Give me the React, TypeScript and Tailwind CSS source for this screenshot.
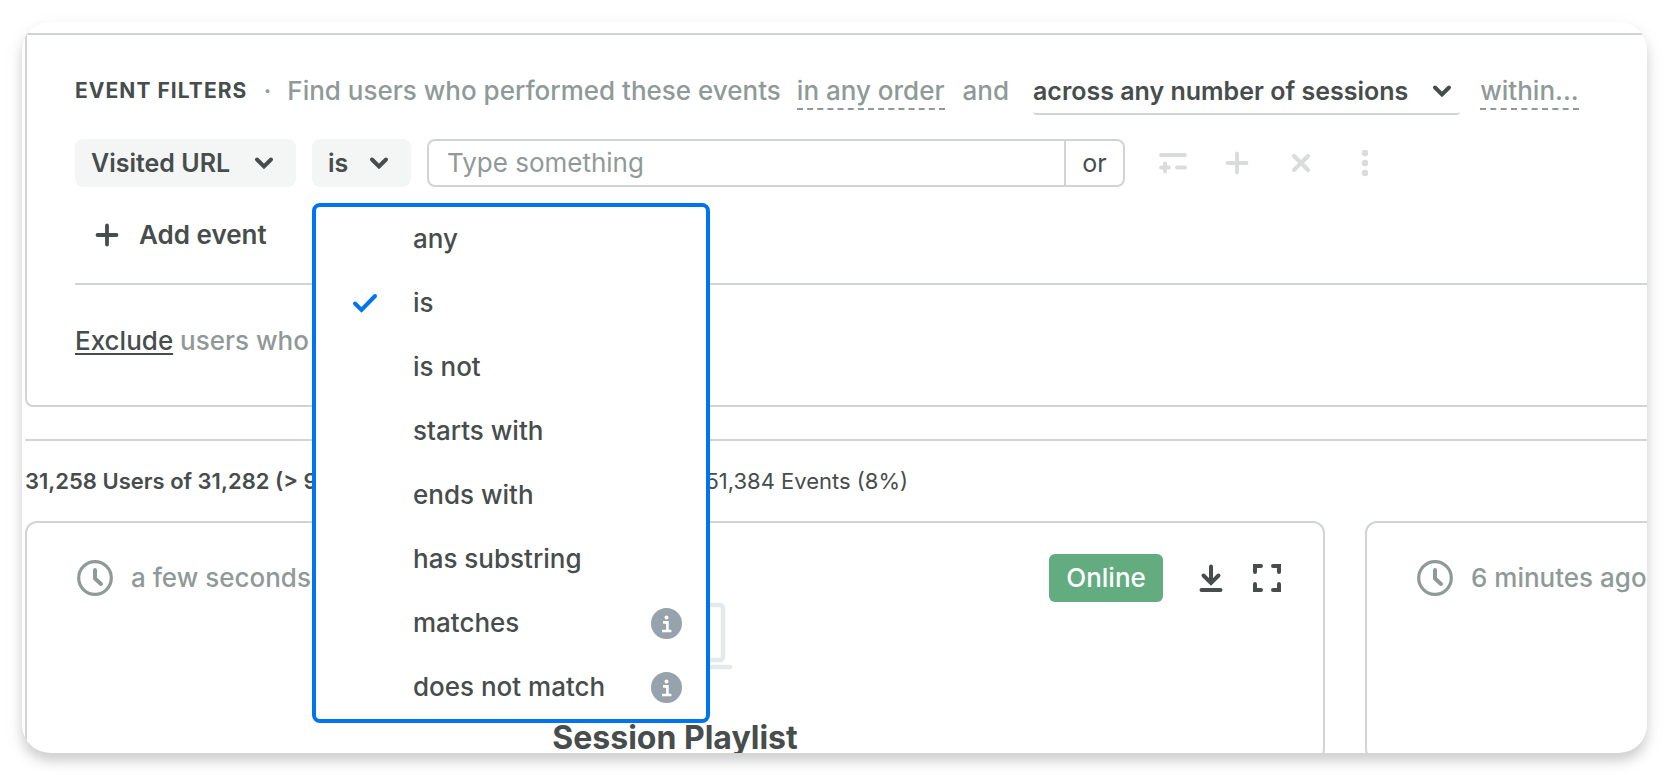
import type { ReactNode } from "react";

const operators = [
  { label: "any" },
  { label: "is" },
  { label: "is not" },
  { label: "starts with" },
  { label: "ends with" },
  { label: "has substring" },
  { label: "matches", info: true },
  { label: "does not match", info: true },
];

function Chevron() {
  return (
    <svg viewBox="0 0 20 14" className="h-[14px] w-5 shrink-0" fill="none" stroke="currentColor" strokeWidth="4" strokeLinecap="round">
      <path d="M3 3.5l7 7 7-7" />
    </svg>
  );
}

function PlusIcon() {
  return (
    <svg viewBox="0 0 24 24" className="size-6" fill="none" stroke="currentColor" strokeWidth="3.8" strokeLinecap="round">
      <path d="M12 2.5v19M2.5 12h19" />
    </svg>
  );
}

function InfoIcon() {
  return (
    <svg viewBox="0 0 31 31" className="size-[31px]">
      <circle cx="15.5" cy="15.5" r="15.5" fill="#96a3ac" />
      <circle cx="15.5" cy="9.4" r="2" fill="#fff" />
      <path d="M12 14.4h4.4v8M11 23h9.4" fill="none" stroke="#fff" strokeWidth="2.6" />
    </svg>
  );
}

function ClockIcon() {
  return (
    <svg viewBox="0 0 36 36" className="size-9 shrink-0" fill="none" stroke="currentColor" strokeLinecap="round" strokeLinejoin="round">
      <circle cx="18" cy="18" r="16.3" strokeWidth="3.2" />
      <path d="M18 10v8.5l6 5.5" strokeWidth="4" />
    </svg>
  );
}

function LaptopIcon() {
  return (
    <svg viewBox="0 0 116 68" className="h-[68px] w-[116px]" fill="none" stroke="#e4e9ec" strokeWidth="4.5" strokeLinecap="round">
      <rect x="10" y="3" width="96" height="55" rx="3" />
      <path d="M3 65h110" />
    </svg>
  );
}

function IconButton(props: { label: string; children: ReactNode }) {
  return (
    <button type="button" aria-label={props.label} className="flex size-8 items-center justify-center">
      {props.children}
    </button>
  );
}

function OperatorMenu() {
  return (
    <ul role="listbox" aria-label="Operator" className="absolute top-16 left-0 z-10 w-[398px] rounded-lg border-4 border-[#0073f0] bg-white font-medium">
      {operators.map((item) => (
        <li key={item.label} role="option" aria-selected={item.label === "is"} className="flex h-16 items-center pr-6 pl-9">
          <span className="w-[61px] text-[#0073f0]">
            {item.label === "is" && (
              <svg viewBox="0 0 26 20" className="h-5 w-[26px]" fill="none" stroke="currentColor" strokeWidth="4" strokeLinecap="round">
                <path d="M3 10.5l6.5 6.5L23 3" />
              </svg>
            )}
          </span>
          <span className="flex-1">{item.label}</span>
          {item.info && <InfoIcon />}
        </li>
      ))}
    </ul>
  );
}

function EventFilters() {
  return (
    <section className="rounded-bl-lg border-2 border-r-0 border-[#d0d5d4] pb-12 pl-12">
      <div className="flex h-[104px] items-start pt-10 font-medium whitespace-nowrap text-[#8f9a98]">
        <h2 className="text-[21px] leading-8 font-bold tracking-wider text-[#464d4c]">EVENT FILTERS</h2>
        <span className="w-10 text-center">·</span>
        <span>Find users who performed these events</span>
        <button type="button" className="ml-4 border-b-2 border-dashed border-[#8f9a98] pb-px">in any order</button>
        <span className="mr-6 ml-[18px]">and</span>
        <button type="button" className="flex items-center gap-6 rounded border-b-2 border-[#d0d5d4] pr-2 pb-1.5 text-[25px] leading-8 font-semibold text-[#464d4c]">
          across any number of sessions
          <Chevron />
        </button>
        <button type="button" className="ml-5 border-b-2 border-dashed border-[#8f9a98] pb-px">within...</button>
      </div>

      <div className="flex h-12 items-center">
        <button type="button" className="flex h-12 w-[221px] items-center justify-between rounded-lg bg-[#f4f6f6] pr-[22px] pl-4 text-[25px] font-semibold">
          Visited URL
          <Chevron />
        </button>
        <div className="relative ml-4">
          <button type="button" aria-haspopup="listbox" aria-expanded="true" className="flex h-12 w-[99px] items-center justify-between rounded-lg bg-[#f4f6f6] pr-[22px] pl-4 text-[25px] font-semibold">
            is
            <Chevron />
          </button>
          <OperatorMenu />
        </div>
        <div className="ml-4 flex h-12 w-[698px] overflow-hidden rounded-lg border-2 border-[#d0d5d4]">
          <input type="text" aria-label="URL" placeholder="Type something" className="min-w-0 flex-1 px-[18px] outline-none placeholder:text-[#8f9a98]" />
          <button type="button" className="w-[59px] border-l-2 border-[#d0d5d4] text-[25px]">or</button>
        </div>
        <div className="ml-8 flex gap-8 text-[#d9dcdb]">
          <IconButton label="Add property">
            <svg viewBox="0 0 28 22" className="h-[22px] w-7 shrink-0" fill="none" stroke="currentColor" strokeWidth="3.8" strokeLinecap="round">
              <path d="M2 3h24M2 15.5h8M6 11.5v8M18 15.5h8" />
            </svg>
          </IconButton>
          <IconButton label="Add">
            <PlusIcon />
          </IconButton>
          <IconButton label="Remove">
            <svg viewBox="0 0 20 20" className="size-5" fill="none" stroke="currentColor" strokeWidth="4.2" strokeLinecap="round">
              <path d="M3 3l14 14M17 3L3 17" />
            </svg>
          </IconButton>
          <IconButton label="More">
            <svg viewBox="0 0 8 28" className="h-7 w-2" fill="currentColor">
              <circle cx="4" cy="4" r="3.2" />
              <circle cx="4" cy="14" r="3.2" />
              <circle cx="4" cy="24" r="3.2" />
            </svg>
          </IconButton>
        </div>
      </div>

      <div className="flex h-[98px] items-center border-b-2 border-[#d0d5d4] pl-5">
        <button type="button" className="flex items-center gap-5 font-semibold">
          <PlusIcon />
          Add event
        </button>
      </div>

      <p className="mt-10 font-medium text-[#8f9a98]">
        <a href="#exclude" className="text-[#464d4c] underline decoration-2 underline-offset-3">Exclude</a> users who
      </p>
    </section>
  );
}

function Results() {
  return (
    <section className="mt-8 border-t-2 border-[#d0d5d4]">
      <div className="flex h-20 items-center text-[22px] whitespace-nowrap">
        <span className="w-[667px] font-semibold">31,258 Users of 31,282 (&gt; 99%)</span>
        <span>251,384 Events (8%)</span>
      </div>
      <div className="flex gap-10">
        <article className="h-60 w-[1300px] shrink-0 rounded-xl border-2 border-[#d0d5d4] px-[50px] pt-[31px]">
          <div className="flex h-12 items-center">
            <div className="flex flex-1 items-center gap-[18px] font-medium text-[#8f9a98]">
              <ClockIcon />
              a few seconds ago
            </div>
            <span className="flex h-12 w-[114px] items-center justify-center rounded-md bg-[#62ac80] font-medium text-white">Online</span>
            <button type="button" aria-label="Download" className="ml-9">
              <svg viewBox="0 0 24 28" className="h-7 w-6" fill="none" stroke="currentColor" strokeWidth="4" strokeLinecap="round">
                <path d="M12 2.5v15M4.5 11.5l7.5 7.5 7.5-7.5M2.5 26h19" />
              </svg>
            </button>
            <button type="button" aria-label="Full screen" className="mr-[-8px] ml-[30px]">
              <svg viewBox="0 0 28 28" className="size-7" fill="none" stroke="currentColor" strokeWidth="4" strokeLinecap="round">
                <path d="M2 8V2h6M20 2h6v6M26 20v6h-6M8 26H2v-6" />
              </svg>
            </button>
          </div>
          <div className="flex flex-col items-center">
            <LaptopIcon />
            <h3 className="mt-12 text-[32px] leading-10 font-bold">Session Playlist</h3>
          </div>
        </article>
        <article className="h-60 w-[1300px] shrink-0 rounded-xl border-2 border-[#d0d5d4] px-[50px] pt-[31px]">
          <div className="flex h-12 items-center gap-[18px] font-medium whitespace-nowrap text-[#8f9a98]">
            <ClockIcon />
            6 minutes ago
          </div>
        </article>
      </div>
    </section>
  );
}

function App() {
  return (
    <div className="h-screen overflow-hidden bg-white p-[22px] font-['Inter',sans-serif] text-[26px] leading-8 text-[#464d4c]">
      <main className="h-full overflow-hidden rounded-[28px] bg-white pt-[11px] pl-[3px] shadow-[0_8px_12px_rgba(0,0,0,0.16),0_6px_24px_rgba(0,0,0,0.05)]">
        <EventFilters />
        <Results />
      </main>
    </div>
  );
}
export default App;
